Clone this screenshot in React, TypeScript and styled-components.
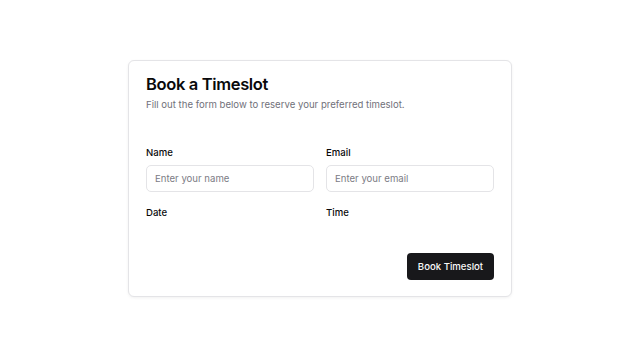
import React from "react";
import styled, { createGlobalStyle } from "styled-components";

const GlobalStyle = createGlobalStyle`
  html, body {
    margin: 0;
    padding: 0;
    background: #ffffff;
    font-family: Inter, "Noto Sans", sans-serif;
    color: #09090b;
  }
  * {
    box-sizing: border-box;
  }
`;

const Page = styled.div`
  display: flex;
  align-items: center;
  justify-content: center;
  min-height: 100vh;
`;

const Card = styled.div`
  width: 384px;
  height: 237px;
  border: 1px solid #e4e4e7;
  border-radius: 6px;
  background: #ffffff;
  box-shadow: 0 1px 3px rgba(0, 0, 0, 0.06);
  padding: 15px 17px 16px;
  display: flex;
  flex-direction: column;
`;

const Header = styled.div`
  display: flex;
  flex-direction: column;
  gap: 5px;
`;

const Title = styled.h2`
  margin: 0;
  font-size: 16.5px;
  line-height: 16.5px;
  font-weight: 600;
  letter-spacing: -0.35px;
  color: #09090b;
`;

const Description = styled.p`
  margin: 0;
  font-size: 9.6px;
  line-height: 14px;
  color: #71717a;
`;

const Form = styled.form`
  display: flex;
  flex-direction: column;
  margin-top: 34px;
  flex: 1;
`;

const Grid = styled.div`
  display: grid;
  grid-template-columns: 1fr 1fr;
  column-gap: 12px;
  row-gap: 13.5px;
`;

const Field = styled.div`
  display: flex;
  flex-direction: column;
  gap: 5.5px;
`;

const Label = styled.label`
  font-size: 9.6px;
  line-height: 14px;
  font-weight: 500;
  color: #09090b;
`;

const Input = styled.input`
  height: 27px;
  width: 100%;
  border: 1px solid #e4e4e7;
  border-radius: 5px;
  padding: 0 8px;
  font-family: inherit;
  font-size: 9.6px;
  color: #09090b;
  background: #ffffff;
  outline: none;

  &::placeholder {
    color: #7c7c85;
  }
`;

const Actions = styled.div`
  display: flex;
  justify-content: flex-end;
  margin-top: auto;
`;

const Button = styled.button`
  height: 27px;
  width: 87px;
  border: none;
  border-radius: 4px;
  background: #18181b;
  color: #fafafa;
  font-family: inherit;
  font-size: 9.6px;
  font-weight: 500;
  cursor: pointer;
`;

const App: React.FC = () => {
  return (
    <>
      <GlobalStyle />
      <Page>
        <Card>
          <Header>
            <Title>Book a Timeslot</Title>
            <Description>
              Fill out the form below to reserve your preferred timeslot.
            </Description>
          </Header>
          <Form onSubmit={e => e.preventDefault()}>
            <Grid>
              <Field>
                <Label htmlFor="name">Name</Label>
                <Input id="name" placeholder="Enter your name" />
              </Field>
              <Field>
                <Label htmlFor="email">Email</Label>
                <Input id="email" type="email" placeholder="Enter your email" />
              </Field>
              <Field>
                <Label>Date</Label>
              </Field>
              <Field>
                <Label>Time</Label>
              </Field>
            </Grid>
            <Actions>
              <Button type="submit">Book Timeslot</Button>
            </Actions>
          </Form>
        </Card>
      </Page>
    </>
  );
};

export default App;
